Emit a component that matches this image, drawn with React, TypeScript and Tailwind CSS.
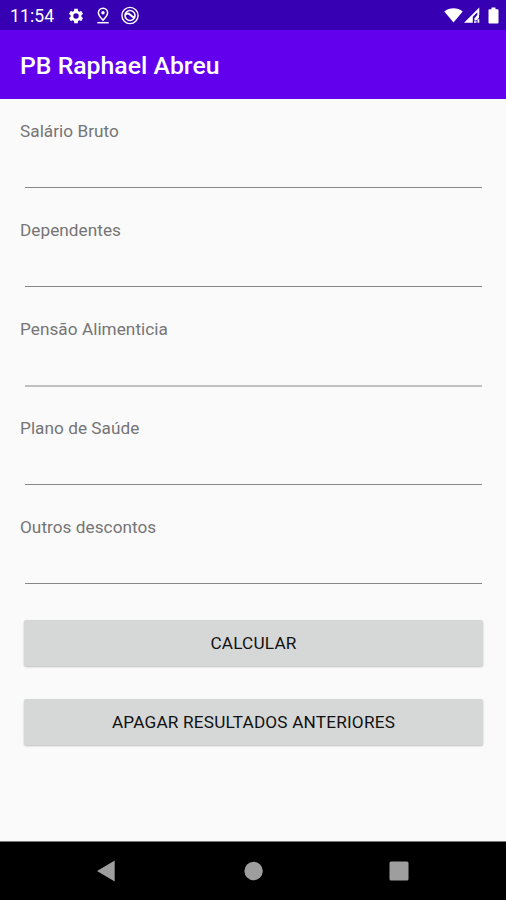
import React from "react";

type FieldProps = { id: string; label: string; soft?: boolean };

const fields: FieldProps[] = [
  { id: "salario", label: "Salário Bruto" },
  { id: "dependentes", label: "Dependentes" },
  { id: "pensao", label: "Pensão Alimenticia", soft: true },
  { id: "plano", label: "Plano de Saúde" },
  { id: "outros", label: "Outros descontos" },
];

function Field({ id, label, soft }: FieldProps) {
  return (
    <div className="flex h-[99px] flex-col">
      <label htmlFor={id} className="h-[23px] whitespace-nowrap text-[17.2px] leading-[23px] tracking-[0.04px] text-[#757575]">
        {label}
      </label>
      <input id={id} className="ml-[5px] mr-1 h-[44px] bg-transparent text-lg outline-none" />
      <div className={soft ? "ml-[5px] mr-1 h-[2px] shrink-0 bg-[#c0c0c0]" : "ml-[5px] mr-1 h-px shrink-0 bg-[#868686]"} />
    </div>
  );
}

function StatusBar() {
  return (
    <header className="flex h-[30px] items-center bg-[#3700b3] pl-[10px] pr-[7px] pt-[1px] text-white">
      <span className="w-[57px] pt-[1px] text-[17.6px] leading-[28px] tracking-[0.1px]">11:54</span>
      <svg className="h-[18px] w-[18px]" viewBox="0 0 24 24" fill="currentColor">
        <path d="M19.14 12.94c.04-.3.06-.61.06-.94s-.02-.64-.07-.94l2.03-1.58a.49.49 0 0 0 .12-.61l-1.92-3.32a.49.49 0 0 0-.59-.22l-2.39.96c-.5-.38-1.03-.7-1.62-.94l-.36-2.54A.48.48 0 0 0 13.92 2.4h-3.84a.48.48 0 0 0-.47.41l-.36 2.54c-.59.24-1.13.57-1.62.94l-2.39-.96a.49.49 0 0 0-.59.22L2.74 8.87a.49.49 0 0 0 .12.61l2.03 1.58c-.05.3-.09.63-.09.94s.02.64.07.94l-2.03 1.58a.49.49 0 0 0-.12.61l1.92 3.32c.12.22.37.29.59.22l2.39-.96c.5.38 1.03.7 1.62.94l.36 2.54c.05.24.24.41.48.41h3.84c.24 0 .44-.17.47-.41l.36-2.54c.59-.24 1.13-.56 1.62-.94l2.39.96c.22.08.47 0 .59-.22l1.92-3.32a.49.49 0 0 0-.12-.61zM12 15.6a3.6 3.6 0 1 1 0-7.2 3.6 3.6 0 0 1 0 7.2z" />
      </svg>
      <svg className="ml-[9px] h-[18px] w-[18px]" viewBox="0 0 18 18" fill="none" stroke="currentColor" strokeWidth="1.5">
        <path d="M9 13.1C6 10.2 4.4 8.100 4.400 5.800a4.600 4.600 0 0 1 9.200 0c0 2.300-1.600 4.400-4.600 7.300z" />
        <circle cx="9" cy="5.800" r="1.700" fill="currentColor" stroke="none" />
        <path d="M3.300 15.700h11.400" />
      </svg>
      <svg className="ml-[8px] h-[20px] w-[20px]" viewBox="0 0 20 20" fill="none" stroke="currentColor">
        <circle cx="10" cy="9.500" r="8.100" strokeWidth="1.400" />
        <circle cx="10" cy="9.500" r="5" strokeWidth="1.600" />
        <path d="M5.500 8.500c1.500-1.400 3.300-1 4.400 0s2.600 2.500 4.300 3" strokeWidth="2" />
      </svg>
      <div className="ml-auto flex items-center">
        <svg className="h-[18px] w-[19px]" viewBox="0 0 19 18" fill="currentColor">
          <path d="M.3 4.500C5.600.2 13.400.2 18.700 4.500L9.500 15.500z" />
        </svg>
        <svg className="ml-[1px] h-[18px] w-[17px]" viewBox="0 0 17 18" fill="currentColor">
          <path d="M0 15.700 15.300 .4V8h-2V5.200L8.800 9.700v6z" />
          <path d="M10.400 11.200 13.300 8H15v2.700l-2.800 2.800h-1.800zM10 14.300h2.500v1.400H10zM13.500 12.300h1.800v3.400h-1.800z" />
        </svg>
        <svg className="ml-[7px] h-[18px] w-[11px]" viewBox="0 0 11 18" fill="currentColor">
          <path d="M3.500 .5h4v1.700h2.100q.9 0 .9.900v12.500q0 .9-.9.900H1.400q-.9 0-.9-.9V3.100q0-.9.900-.9h2.100z" />
        </svg>
      </div>
    </header>
  );
}

function ActionButton({ children }: { children: React.ReactNode }) {
  return (
    <button className="ml-1 mr-[3px] h-[46px] rounded-[2px] bg-[#d6d8d7] text-[17.2px] leading-[46px] tracking-[0.19px] text-[#111] shadow-[0_1px_2px_rgba(0,0,0,0.24)]">
      {children}
    </button>
  );
}

export default function App() {
  return (
    <div className="flex h-[900px] w-[506px] flex-col overflow-hidden bg-[#fafafa] font-[Roboto,sans-serif]">
      <StatusBar />
      <div className="flex h-[69px] items-center bg-[#6200ee] pl-[20px] pt-[3px]">
        <h1 className="text-[24.8px] font-medium text-white">PB Raphael Abreu</h1>
      </div>
      <main className="flex flex-1 flex-col px-[20px] pt-[21px]">
        {fields.map((f) => (
          <Field key={f.id} {...f} />
        ))}
        <div className="mt-[5px] flex flex-col gap-[33px]">
          <ActionButton>CALCULAR</ActionButton>
          <ActionButton>APAGAR RESULTADOS ANTERIORES</ActionButton>
        </div>
      </main>
      <nav className="flex h-[59px] items-start border-t border-[#777] bg-black pl-[96px] pt-[18px] text-[#9e9e9e]">
        <svg className="h-[22px] w-[20px]" viewBox="0 0 20 22" fill="currentColor">
          <path d="M1 11 18.700 .5v21z" />
        </svg>
        <svg className="ml-[128px] h-[22px] w-[20px]" viewBox="0 0 20 22" fill="currentColor">
          <circle cx="9.600" cy="11" r="9.200" />
        </svg>
        <svg className="ml-[125px] h-[22px] w-[20px]" viewBox="0 0 20 22" fill="currentColor">
          <rect x=".5" y="1.500" width="19" height="19" rx="1.500" />
        </svg>
      </nav>
    </div>
  );
}
